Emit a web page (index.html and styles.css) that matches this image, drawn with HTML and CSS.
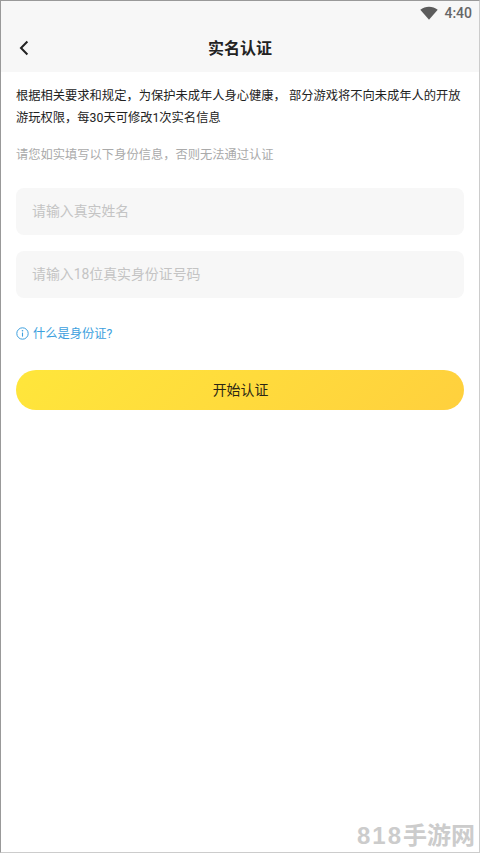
FILE: index.html
```html
<!DOCTYPE html>
<html lang="zh-CN">
<head>
<meta charset="utf-8">
<title>实名认证</title>
<link rel="stylesheet" href="styles.css">
</head>
<body>
<div class="screen">
  <header class="header">
    <div class="status">
      <svg class="wifi" viewBox="0 0 18 14"><path d="M0.3 3.7C5.3-.4 12.7-.4 17.7 3.7L9 13.8z" fill="#5c5c5c"/></svg>
      <span class="time">4:40</span>
    </div>
    <div class="navbar">
      <svg class="back" viewBox="0 0 10 16"><path d="M8.4 1.5L2 8l6.4 6.5" fill="none" stroke="#222" stroke-width="2"/></svg>
      <h1 class="title">实名认证</h1>
    </div>
  </header>
  <main class="content">
    <p class="notice">根据相关要求和规定，为保护未成年人身心健康， 部分游戏将不向未成年人的开放<br>游玩权限，每30天可修改1次实名信息</p>
    <p class="hint">请您如实填写以下身份信息，否则无法通过认证</p>
    <input class="field" type="text" placeholder="请输入真实姓名">
    <input class="field" type="text" placeholder="请输入18位真实身份证号码">
    <a class="help">
      <svg class="info" viewBox="0 0 13 13"><circle cx="6.5" cy="6.5" r="5.7" fill="none" stroke="#3d9fde"/><circle cx="6.5" cy="3.8" r=".8" fill="#3d9fde"/><path d="M6.5 5.6v4" fill="none" stroke="#3d9fde" stroke-width="1.1"/></svg>
      <span>什么是身份证?</span>
    </a>
    <button class="submit">开始认证</button>
  </main>
  <div class="watermark"><span class="digits">818</span><span>手游网</span></div>
</div>
</body>
</html>
```
FILE: styles.css
```css
* { box-sizing: border-box; }
body {
  margin: 0;
  font-family: Roboto, "Noto Sans CJK SC", sans-serif;
  color: #222;
}
.screen {
  position: relative;
  height: 853px;
  overflow: hidden;
  background: #fff;
  border: 1px solid #999;
  border-right-color: #ccc;
  border-bottom-color: #ccc;
}
.header {
  height: 71px;
  background: #f7f7f7;
}
.status {
  display: flex;
  justify-content: flex-end;
  align-items: center;
  height: 23px;
  padding-right: 7px;
  gap: 6px;
}
.wifi { width: 18px; height: 14px; }
.time {
  padding-top: 1px;
  font-size: 14px;
  line-height: 22px;
  font-weight: 500;
  color: #666;
}
.navbar {
  display: grid;
  grid-template-columns: 60px 1fr 60px;
  align-items: center;
  height: 48px;
}
.back { width: 10px; height: 16px; margin-left: 18px; }
.title {
  margin: 0;
  padding-top: 2px;
  font-size: 16px;
  line-height: 24px;
  font-weight: 700;
  text-align: center;
}
.content {
  display: flex;
  flex-direction: column;
  padding: 13px 15px 0;
}
.notice {
  margin: 0;
  font-size: 12.28px;
  line-height: 22px;
  white-space: nowrap;
}
.hint {
  margin: 16px 0 23px;
  font-size: 12.28px;
  line-height: 20px;
  color: #aaa;
}
.field {
  height: 47px;
  margin: 0 0 16px;
  padding: 0 16px 2px;
  border: 0;
  border-radius: 8px;
  background: #f7f7f7;
  font-family: inherit;
  font-size: 13.9px;
}
.field::placeholder { color: #c4c4c4; }
.help {
  display: flex;
  align-items: center;
  gap: 4px;
  height: 20px;
  margin-top: 9px;
  font-size: 12.28px;
  color: #3d9fde;
}
.info { width: 13px; height: 13px; }
.submit {
  height: 40px;
  margin: 27px 0 0;
  padding: 0 0 2px 1px;
  border: 0;
  border-radius: 20px;
  background: linear-gradient(135deg, #ffe63b, #ffd03d);
  font-family: inherit;
  font-size: 13.9px;
  color: #2b2615;
}
.watermark {
  position: absolute;
  right: 4px;
  bottom: 1px;
  display: flex;
  align-items: center;
  font-size: 24px;
  line-height: 30px;
  font-weight: 700;
  color: #ccc;
}
.digits {
  font-family: "Liberation Sans", sans-serif;
  letter-spacing: 2px;
}
```
